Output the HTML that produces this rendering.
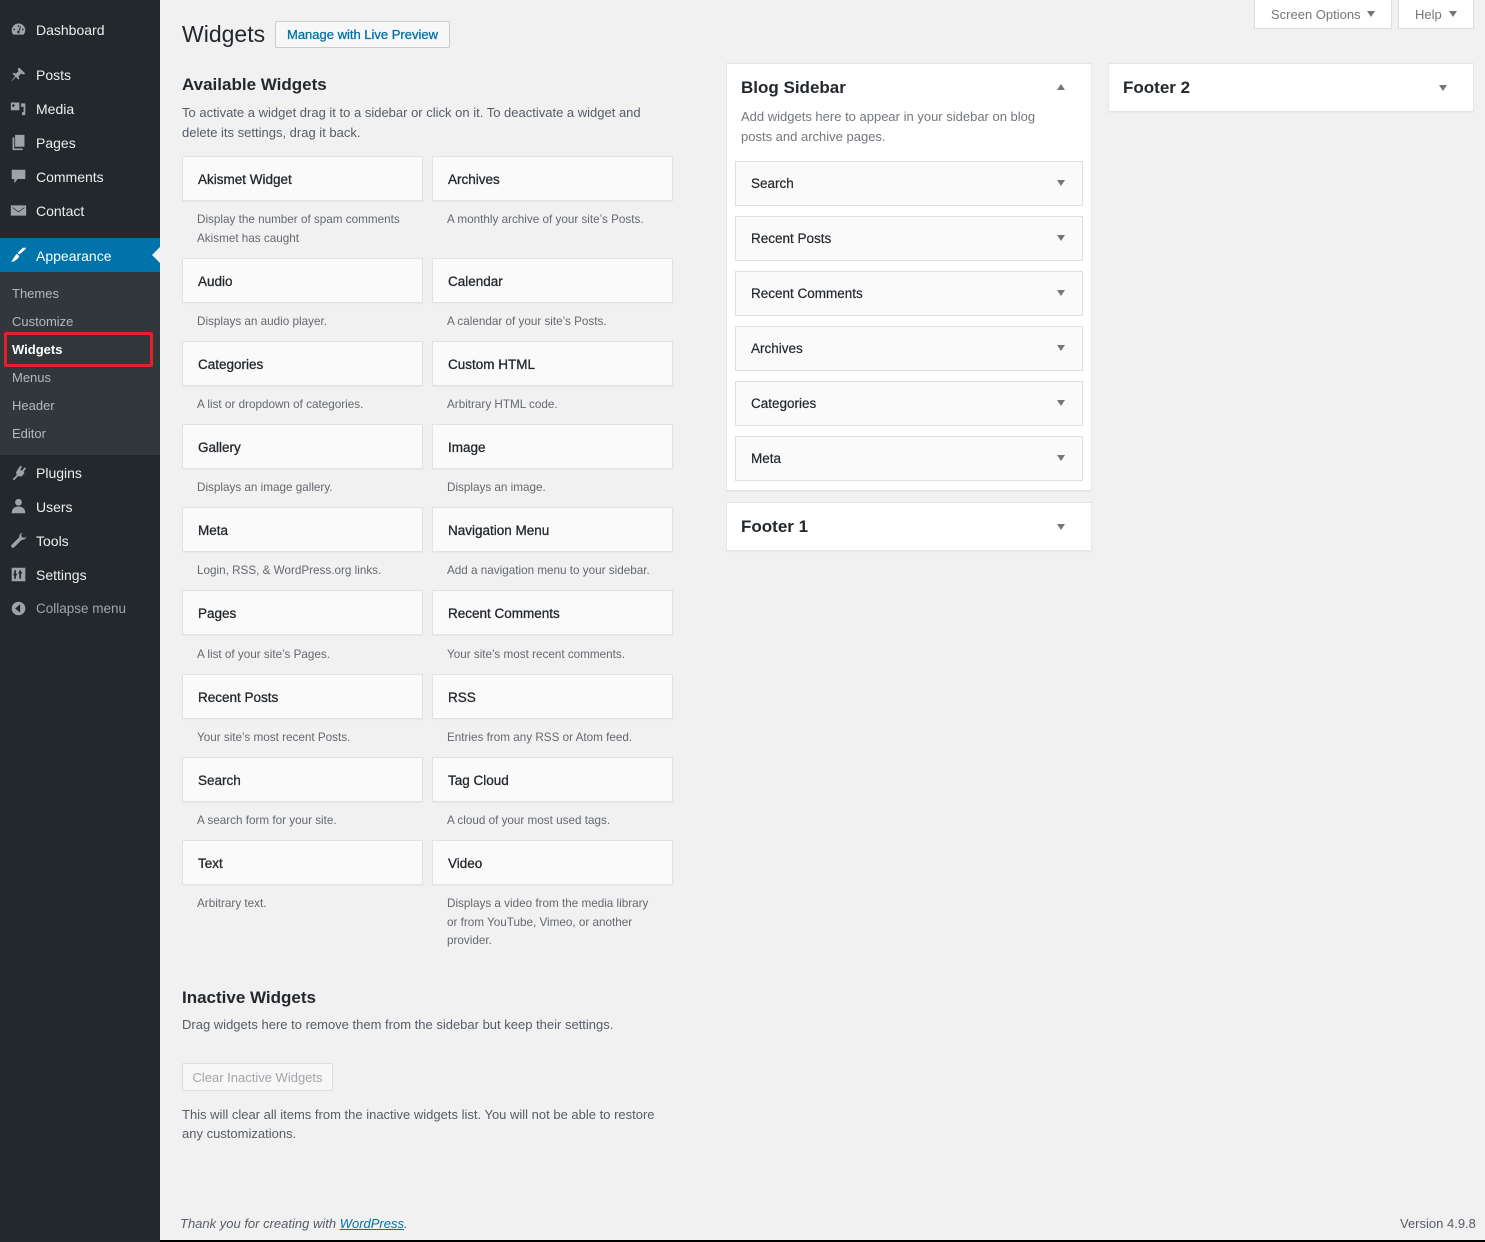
<!DOCTYPE html>
<html><head><meta charset="utf-8"><style>
*{box-sizing:border-box;margin:0;padding:0}
body{width:1485px;height:1242px;background:#f1f1f1;font-family:"Liberation Sans",sans-serif;color:#23282d;position:relative;overflow:hidden;font-size:13px}
.a{position:absolute}
#side{left:0;top:0;width:160px;height:1242px;background:#23282d}
.mi{position:absolute;left:36px;color:#eee;font-size:14px;line-height:20px}
.ic{position:absolute;left:10px;width:17px;height:17px;fill:#9ea3a8}
.sub{position:absolute;left:12px;color:#b4b9be;font-size:13px;line-height:18px}
.card{position:absolute;width:241px;height:45px;background:#fafafa;border:1px solid #e2e2e2;box-shadow:0 1px 1px rgba(0,0,0,.04);font-size:13.5px;color:#23282d;padding-left:15px;line-height:45px;-webkit-text-stroke:0.3px #23282d}
.desc{position:absolute;width:225px;font-size:11.7px;color:#646970;line-height:18.5px}
.sw{position:absolute;left:735px;width:348px;height:45px;background:#fafafa;border:1px solid #dfdfdf;padding-left:15px;line-height:44px;font-size:13.5px;-webkit-text-stroke:0.2px #23282d}
.arr{position:absolute;width:0;height:0;border-left:4px solid transparent;border-right:4px solid transparent;border-top:6px solid #72777c}
.panel{position:absolute;background:#fff;border:1px solid #e5e5e5;box-shadow:0 1px 1px rgba(0,0,0,.04)}
h3{font-size:17px;font-weight:bold}
</style></head><body>
<div id="side" class="a"></div>
<svg class="ic" style="top:21px" viewBox="0 0 20 20"><path d="M10 3a8 8 0 0 0-8 8c0 2 .8 3.8 2 5h12a8 8 0 0 0 2-5 8 8 0 0 0-8-8zm0 2a1 1 0 1 1 0 2 1 1 0 0 1 0-2zM5 9a1 1 0 1 1 0 2 1 1 0 0 1 0-2zm10 0a1 1 0 1 1 0 2 1 1 0 0 1 0-2zm-3-3 1 1-2 5a1.5 1.5 0 1 1-1-.5z"/></svg>
<div class="mi" style="top:20px">Dashboard</div>
<svg class="ic" style="top:66px" viewBox="0 0 20 20"><path d="M11 2l7 7-2 1-3-1-3 3 1 3-1 1-3-3-5 5v-1l4-5-3-3 1-1 3 1 3-3-1-3z"/></svg>
<div class="mi" style="top:65px">Posts</div>
<svg class="ic" style="top:100px" viewBox="0 0 20 20"><path d="M1 3h10v9H1zM4 5a1.5 1.5 0 1 0 0 3 1.5 1.5 0 0 0 0-3zM13 4h5v12a2 2 0 1 1-2-2V8h-3z"/></svg>
<div class="mi" style="top:99px">Media</div>
<svg class="ic" style="top:134px" viewBox="0 0 20 20"><path d="M6 1h11v14H6zM3 4h2v13h10v2H3z"/></svg>
<div class="mi" style="top:133px">Pages</div>
<svg class="ic" style="top:168px" viewBox="0 0 20 20"><path d="M2 2h16v11H9l-4 5v-5H2z"/></svg>
<div class="mi" style="top:167px">Comments</div>
<svg class="ic" style="top:202px" viewBox="0 0 20 20"><path d="M1 4h18v12H1zm2 2v1l7 5 7-5V6l-7 5z"/></svg>
<div class="mi" style="top:201px">Contact</div>
<div class="a" style="left:0;top:238px;width:160px;height:34px;background:#0073aa"></div>
<div class="a" style="left:152px;top:247px;border-top:8px solid transparent;border-bottom:8px solid transparent;border-right:8px solid #f1f1f1"></div>
<svg class="ic" style="top:246px;fill:#fff" viewBox="0 0 20 20"><path d="M19 2l-1 2-7 6-2-2 6-6zM8 9l3 3-2 3-4 3-4 1 1-1 3-5z"/></svg>
<div class="mi" style="top:246px;color:#fff">Appearance</div>
<div class="a" style="left:0;top:272px;width:160px;height:183px;background:#32373c"></div>
<div class="sub" style="top:285px">Themes</div>
<div class="sub" style="top:313px">Customize</div>
<div class="a" style="left:4px;top:332px;width:149px;height:35px;border:3px solid #e3212b;border-radius:2px"></div>
<div class="sub" style="top:341px;color:#fff;font-weight:bold">Widgets</div>
<div class="sub" style="top:369px">Menus</div>
<div class="sub" style="top:397px">Header</div>
<div class="sub" style="top:425px">Editor</div>
<svg class="ic" style="top:464px" viewBox="0 0 20 20"><path d="M12 2l2 1-2 4 2 1 3-4 2 1-3 4 1 2-4 4-3-1-5 5-2-1 5-5-1-3z"/></svg>
<div class="mi" style="top:463px">Plugins</div>
<svg class="ic" style="top:498px" viewBox="0 0 20 20"><circle cx="10" cy="5" r="4"/><path d="M2 18c0-6 4-8 8-8s8 2 8 8z"/></svg>
<div class="mi" style="top:497px">Users</div>
<svg class="ic" style="top:532px" viewBox="0 0 20 20"><path d="M15 1a4 4 0 0 0-4 5L2 15a2 2 0 0 0 3 3l9-9a4 4 0 0 0 5-4l-2 2-3-1-1-3z"/></svg>
<div class="mi" style="top:531px">Tools</div>
<svg class="ic" style="top:566px" viewBox="0 0 20 20"><path d="M2 2h16v16H2zm3 3v4H4v2h1v4h2v-4h1V9H7V5zm6 0v2h-1v2h1v6h2V9h1V7h-1V5z"/></svg>
<div class="mi" style="top:565px">Settings</div>
<svg class="ic" style="top:600px" viewBox="0 0 20 20"><circle cx="10" cy="10" r="8"/><path d="M12 5v10l-6-5z" fill="#23282d"/></svg>
<div class="mi" style="top:599px;color:#a0a5aa;font-size:13.5px">Collapse menu</div>

<div class="a" style="left:182px;top:21px;font-size:23px;color:#23282d">Widgets</div>
<div class="a" style="left:275px;top:21px;width:175px;height:27px;border:1px solid #ccc;background:#f7f7f7;color:#0073aa;font-size:13px;line-height:26px;text-align:center;border-radius:2px;-webkit-text-stroke:0.3px #0073aa">Manage with Live Preview</div>
<div class="a" style="left:1254px;top:0;width:138px;height:29px;background:#fff;border:1px solid #ddd;border-top:0;font-size:13px;color:#72777c;line-height:30px;padding-left:16px">Screen Options</div>
<div class="arr" style="left:1367px;top:11px"></div>
<div class="a" style="left:1398px;top:0;width:76px;height:29px;background:#fff;border:1px solid #ddd;border-top:0;font-size:13px;color:#72777c;line-height:30px;padding-left:16px">Help</div>
<div class="arr" style="left:1449px;top:11px"></div>

<h3 class="a" style="left:182px;top:75px">Available Widgets</h3>
<div class="a" style="left:182px;top:103px;width:490px;color:#555d66;font-size:13px;line-height:20px">To activate a widget drag it to a sidebar or click on it. To deactivate a widget and delete its settings, drag it back.</div>

<div class="card" style="left:182px;top:156px">Akismet Widget</div><div class="card" style="left:432px;top:156px">Archives</div>
<div class="desc" style="left:197px;top:211px">Display the number of spam comments Akismet has caught</div><div class="desc" style="left:447px;top:211px">A monthly archive of your site’s Posts.</div>
<div class="card" style="left:182px;top:258px">Audio</div><div class="card" style="left:432px;top:258px">Calendar</div>
<div class="desc" style="left:197px;top:313px">Displays an audio player.</div><div class="desc" style="left:447px;top:313px">A calendar of your site’s Posts.</div>
<div class="card" style="left:182px;top:341px">Categories</div><div class="card" style="left:432px;top:341px">Custom HTML</div>
<div class="desc" style="left:197px;top:396px">A list or dropdown of categories.</div><div class="desc" style="left:447px;top:396px">Arbitrary HTML code.</div>
<div class="card" style="left:182px;top:424px">Gallery</div><div class="card" style="left:432px;top:424px">Image</div>
<div class="desc" style="left:197px;top:479px">Displays an image gallery.</div><div class="desc" style="left:447px;top:479px">Displays an image.</div>
<div class="card" style="left:182px;top:507px">Meta</div><div class="card" style="left:432px;top:507px">Navigation Menu</div>
<div class="desc" style="left:197px;top:562px">Login, RSS, &amp; WordPress.org links.</div><div class="desc" style="left:447px;top:562px">Add a navigation menu to your sidebar.</div>
<div class="card" style="left:182px;top:590px">Pages</div><div class="card" style="left:432px;top:590px">Recent Comments</div>
<div class="desc" style="left:197px;top:646px">A list of your site’s Pages.</div><div class="desc" style="left:447px;top:646px">Your site’s most recent comments.</div>
<div class="card" style="left:182px;top:674px">Recent Posts</div><div class="card" style="left:432px;top:674px">RSS</div>
<div class="desc" style="left:197px;top:729px">Your site’s most recent Posts.</div><div class="desc" style="left:447px;top:729px">Entries from any RSS or Atom feed.</div>
<div class="card" style="left:182px;top:757px">Search</div><div class="card" style="left:432px;top:757px">Tag Cloud</div>
<div class="desc" style="left:197px;top:812px">A search form for your site.</div><div class="desc" style="left:447px;top:812px">A cloud of your most used tags.</div>
<div class="card" style="left:182px;top:840px">Text</div><div class="card" style="left:432px;top:840px">Video</div>
<div class="desc" style="left:197px;top:895px">Arbitrary text.</div><div class="desc" style="left:447px;top:895px;width:210px">Displays a video from the media library or from YouTube, Vimeo, or another provider.</div>

<h3 class="a" style="left:182px;top:988px">Inactive Widgets</h3>
<div class="a" style="left:182px;top:1017px;color:#555d66;font-size:13px">Drag widgets here to remove them from the sidebar but keep their settings.</div>
<div class="a" style="left:182px;top:1063px;width:151px;height:28px;border:1px solid #ddd;background:#f7f7f7;color:#a0a5aa;font-size:13px;line-height:27px;text-align:center;border-radius:2px">Clear Inactive Widgets</div>
<div class="a" style="left:182px;top:1105px;width:495px;color:#555d66;font-size:13px;line-height:19px">This will clear all items from the inactive widgets list. You will not be able to restore any customizations.</div>
<div class="a" style="left:180px;top:1216px;font-style:italic;color:#555d66;font-size:13px">Thank you for creating with <span style="color:#0073aa;text-decoration:underline">WordPress</span>.</div>
<div class="a" style="left:1400px;top:1216px;color:#555d66;font-size:13px">Version 4.9.8</div>
<div class="a" style="left:160px;top:1240px;width:1325px;height:2px;background:#000"></div>

<div class="panel" style="left:726px;top:63px;width:366px;height:428px"></div>
<div class="a" style="left:741px;top:78px;font-size:17px;font-weight:bold">Blog Sidebar</div>
<div class="a" style="left:1057px;top:84px;border-left:4px solid transparent;border-right:4px solid transparent;border-bottom:6px solid #72777c"></div>
<div class="a" style="left:741px;top:107px;width:320px;color:#72777c;font-size:13px;line-height:20px">Add widgets here to appear in your sidebar on blog posts and archive pages.</div>
<div class="sw" style="top:161px">Search</div><div class="arr" style="left:1057px;top:180px"></div>
<div class="sw" style="top:216px">Recent Posts</div><div class="arr" style="left:1057px;top:235px"></div>
<div class="sw" style="top:271px">Recent Comments</div><div class="arr" style="left:1057px;top:290px"></div>
<div class="sw" style="top:326px">Archives</div><div class="arr" style="left:1057px;top:345px"></div>
<div class="sw" style="top:381px">Categories</div><div class="arr" style="left:1057px;top:400px"></div>
<div class="sw" style="top:436px">Meta</div><div class="arr" style="left:1057px;top:455px"></div>

<div class="panel" style="left:726px;top:502px;width:366px;height:49px"></div>
<div class="a" style="left:741px;top:517px;font-size:17px;font-weight:bold">Footer 1</div>
<div class="arr" style="left:1057px;top:524px"></div>
<div class="panel" style="left:1108px;top:63px;width:366px;height:49px"></div>
<div class="a" style="left:1123px;top:78px;font-size:17px;font-weight:bold">Footer 2</div>
<div class="arr" style="left:1439px;top:85px"></div>
</body></html>
